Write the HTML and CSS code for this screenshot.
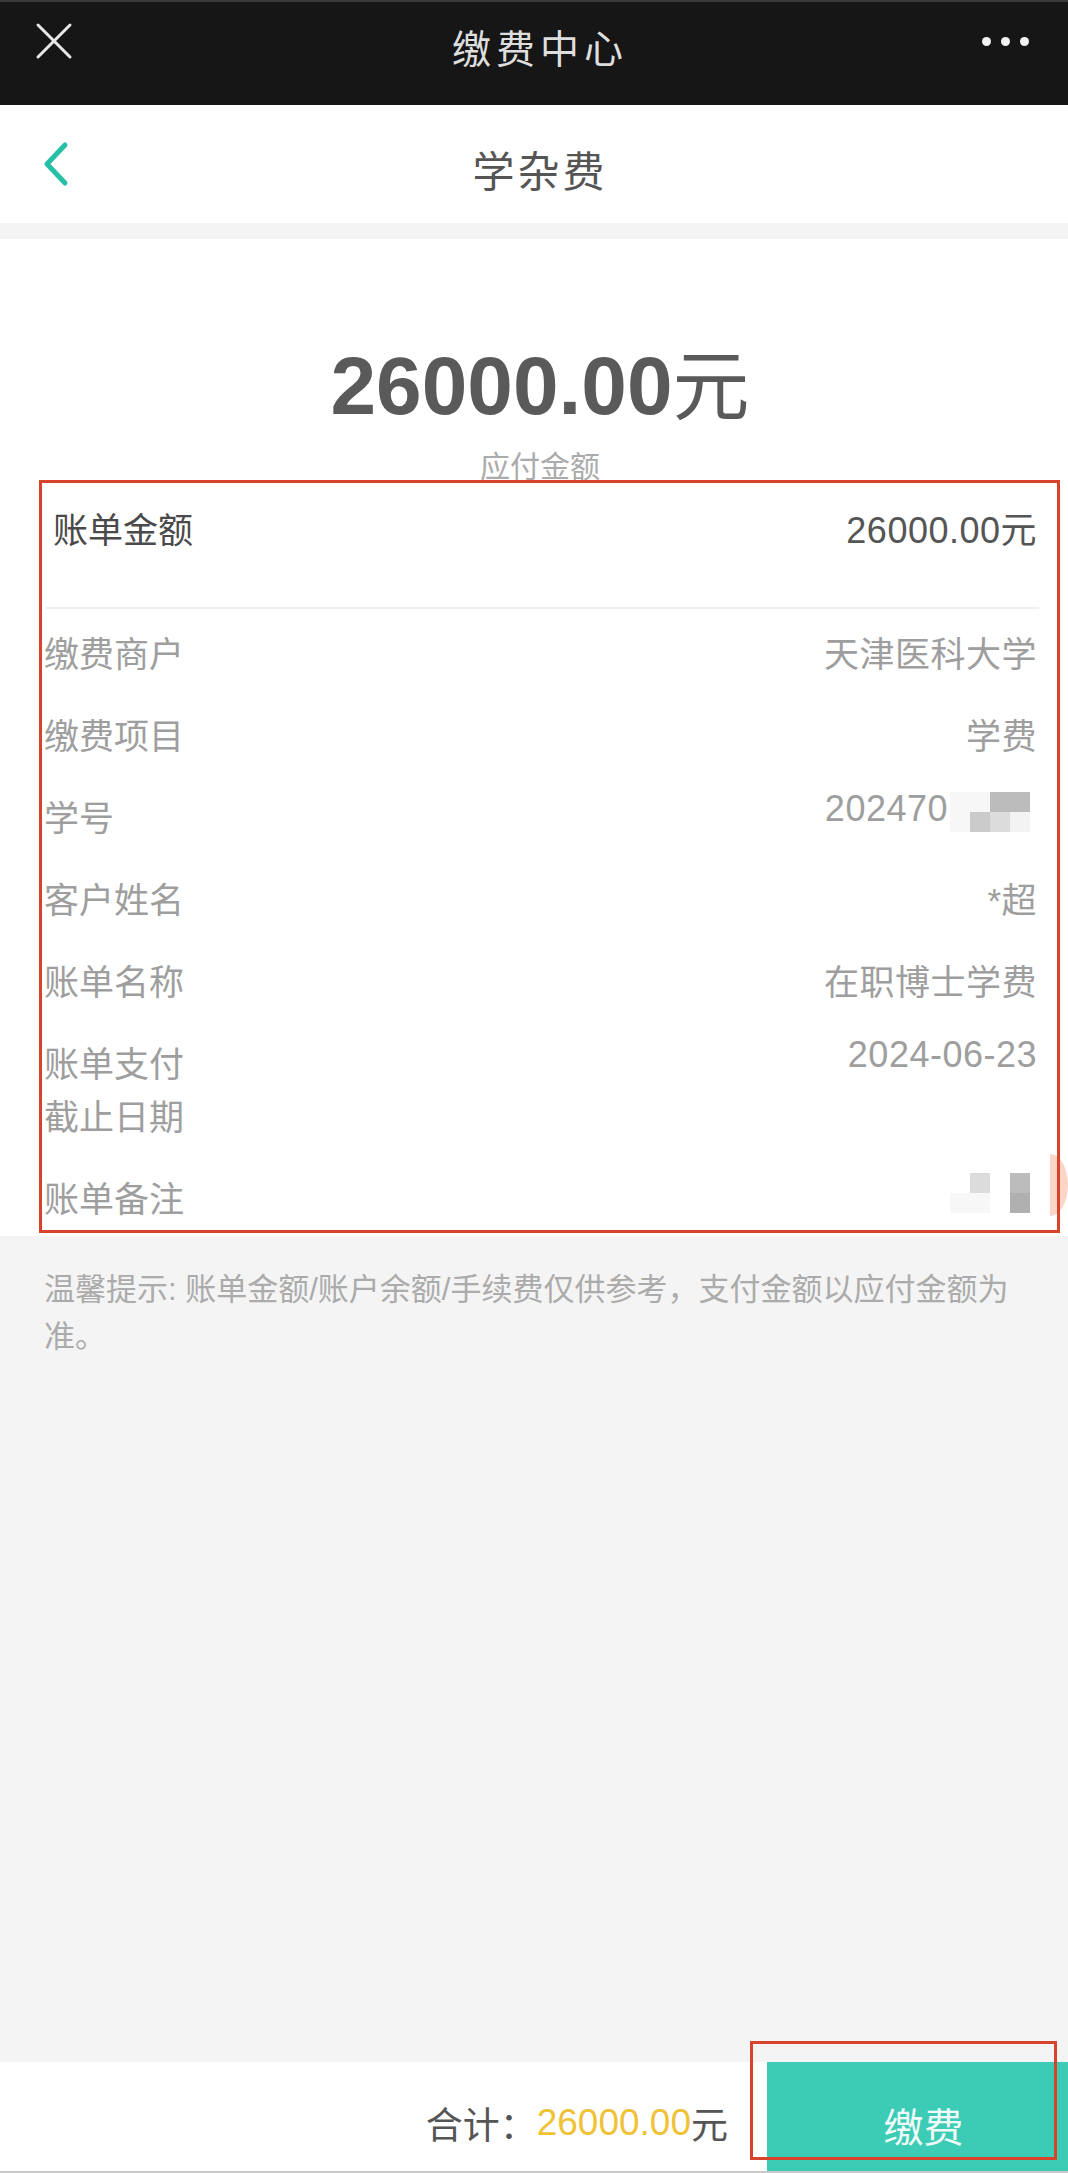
FILE: index.html
```html
<!DOCTYPE html>
<html lang="zh-CN">
<head>
<meta charset="utf-8">
<title>学杂费</title>
<meta name="viewport" content="width=device-width,initial-scale=1.0,user-scalable=no">
<link rel="stylesheet" href="styles.css">
</head>

<body>
<!-- ===== 顶部栏 ===== -->
<header class="topbar">
  <div class="bar-side bar-left">
    <svg class="icon-close" width="38" height="38" viewBox="0 0 38 38">
      <path d="M3 3 L35 35 M35 3 L3 35" stroke="#e8e8e8" stroke-width="3" stroke-linecap="round"/>
    </svg>
  </div>
  <div class="bar-title">缴费中心</div>
  <div class="bar-side bar-right">
    <span class="dot"></span><span class="dot"></span><span class="dot"></span>
  </div>
</header>

<!-- ===== 导航 ===== -->
<nav class="navbar">
  <div class="bar-side bar-left">
    <svg class="icon-back" width="28" height="46" viewBox="0 0 28 46">
      <path d="M23 4 L5 23 L23 42" fill="none" stroke="#27bfa6" stroke-width="5" stroke-linecap="round" stroke-linejoin="round"/>
    </svg>
  </div>
  <h1 class="nav-title">学杂费</h1>
  <div class="bar-side bar-right"></div>
</nav>

<!-- ===== 账单 ===== -->
<main class="bill">
  <section class="summary">
    <div class="amount">26000.00<span class="unit">元</span></div>
    <div class="amount-label">应付金额</div>
  </section>

  <section class="details">
    <div class="row row-head">
      <span class="label">账单金额</span>
      <span class="value">26000.00元</span>
    </div>
    <div class="divider"></div>

    <ul class="list">
      <li class="row"><span class="label">缴费商户</span><span class="value">天津医科大学</span></li>
      <li class="row"><span class="label">缴费项目</span><span class="value">学费</span></li>
      <li class="row">
        <span class="label">学号</span>
        <span class="value value-mask">
          <span class="num">202470</span>
          <span class="mosaic">
            <i class="c1"></i><i class="c1"></i><i class="c4"></i><i class="c4"></i>
            <i class="c1"></i><i class="c3"></i><i class="c2"></i><i class="c0"></i>
          </span>
        </span>
      </li>
      <li class="row"><span class="label">客户姓名</span><span class="value">*超</span></li>
      <li class="row"><span class="label">账单名称</span><span class="value">在职博士学费</span></li>
      <li class="row"><span class="label">账单支付截止日期</span><span class="value num">2024-06-23</span></li>
      <li class="row">
        <span class="label">账单备注</span>
        <span class="value value-mask">
          <span class="mosaic">
            <i></i><i class="c2"></i><i></i><i class="c4"></i>
            <i class="c1"></i><i class="c1"></i><i></i><i class="c5"></i>
          </span>
        </span>
      </li>
    </ul>

    <div class="peek"></div>
    <div class="mark mark-bill"></div>
  </section>
</main>

<p class="tips">温馨提示: 账单金额/账户余额/手续费仅供参考，支付金额以应付金额为准。</p>

<!-- ===== 底部 ===== -->
<footer class="paybar">
  <div class="total">合计：<span class="total-num">26000.00</span>元</div>
  <button class="pay-btn">缴费</button>
  <div class="mark mark-pay"></div>
</footer>
</body>
</html>
```

FILE: styles.css
```css
/* ==== 基础 ==== */
*,*::before,*::after{box-sizing:border-box;margin:0;padding:0}
html,body{width:100%}
body{
  min-height:100vh;
  display:flex;flex-direction:column;
  background:#f4f4f4;
  font-family:"Liberation Sans","Noto Sans CJK SC",sans-serif;
  color:#555;
}

/* ==== 顶部栏 ==== */
.topbar{
  height:105px;
  display:flex;align-items:center;
  padding-bottom:25px;
  background:#161616;border-top:2px solid #3a3a3a;
}
.bar-side{display:flex;align-items:center}
.bar-left{width:140px;padding-left:35px}
.bar-right{width:128px;justify-content:flex-end;gap:10px;padding-right:39px}
.bar-title{
  flex:1;text-align:center;
  margin-top:10px;
  font-family:"Noto Sans CJK SC",sans-serif;
  font-size:39px;line-height:40px;letter-spacing:5px;
  color:#dedede;
}
.dot{width:9px;height:9px;border-radius:50%;background:#f2f2f2}
.icon-close{display:block}

/* ==== 导航 ==== */
.navbar{
  height:118px;
  display:flex;align-items:center;
  background:#fff;
  margin-bottom:16px;
}
.navbar .bar-left{padding-left:42px}
.icon-back{display:block}
.nav-title{
  flex:1;text-align:center;
  margin-top:10px;
  font-family:"Noto Sans CJK SC",sans-serif;
  font-weight:400;font-size:42px;line-height:44px;letter-spacing:3px;
  color:#555;
}

/* ==== 金额 ==== */
.bill{background:#fff}
.summary{padding:106px 0 6px 12px;text-align:center}
.amount{font-size:82px;line-height:82px;font-weight:700;color:#5a5a5a}
.amount .unit{font-size:77px;font-weight:400}
.amount-label{
  margin-top:21px;
  font-family:"Noto Sans CJK SC",sans-serif;
  font-size:30px;line-height:30px;color:#ababab;
}

/* ==== 明细 ==== */
.details{position:relative}
.list{list-style:none}
.row{
  display:flex;align-items:flex-start;
  padding:19px 31px 10px 44px;
  font-size:35px;line-height:53px;
  color:#9e9e9e;
}
.row .label{flex:0 0 150px}
.row .value{flex:1;text-align:right;white-space:nowrap;letter-spacing:.5px}
.row .num{font-size:36px;line-height:33px}
.row-head{padding:19px 31px 50px 53px;color:#4a4a4a}
.row-head .value{font-size:36px;color:#555}
.divider{height:2px;margin:0 29px 0 46px;background:#efefef}

.value-mask{display:flex;justify-content:flex-end;align-items:flex-start;gap:2px}
.mosaic{
  display:grid;grid-template-columns:repeat(4,20px);grid-auto-rows:20px;
  margin-right:7px;
}
.mosaic i{display:block}
.mosaic .c0{background:#f3f3f3}
.mosaic .c1{background:#f7f7f7}
.mosaic .c2{background:#dcdcdc}
.mosaic .c3{background:#cbcbcb}
.mosaic .c4{background:#bcbcbc}
.mosaic .c5{background:#b0b0b0}

/* 红框标注 */
.mark{position:absolute;border:3px solid #d8432c;pointer-events:none}
.mark-bill{top:-5px;left:39px;width:1021px;height:753px}
.peek{
  position:absolute;top:669px;right:0;
  width:18px;height:62px;
  background:#fbd6c8;
  border-radius:0 18px 18px 0 / 0 31px 31px 0;
}

/* ==== 提示 ==== */
.tips{
  flex:1;
  padding:30px 30px 0 44px;
  font-size:31px;line-height:47px;color:#ababab;
}

/* ==== 底部 ==== */
.paybar{
  position:relative;
  height:111px;
  display:flex;align-items:stretch;justify-content:flex-end;
  background:#fff;border-bottom:2px solid #c9c9c9;
}
.total{
  display:flex;align-items:center;
  padding:12px 39px 0 0;
  font-size:37px;color:#555;
}
.total-num{color:#f0c236}
.pay-btn{
  width:301px;
  padding:16px 0 0 12px;
  border:0;background:#3ccbb5;
  font-family:"Noto Sans CJK SC",sans-serif;
  font-size:40px;color:#eefbf8;
}
.mark-pay{top:-21px;left:750px;width:307px;height:119px}
```
